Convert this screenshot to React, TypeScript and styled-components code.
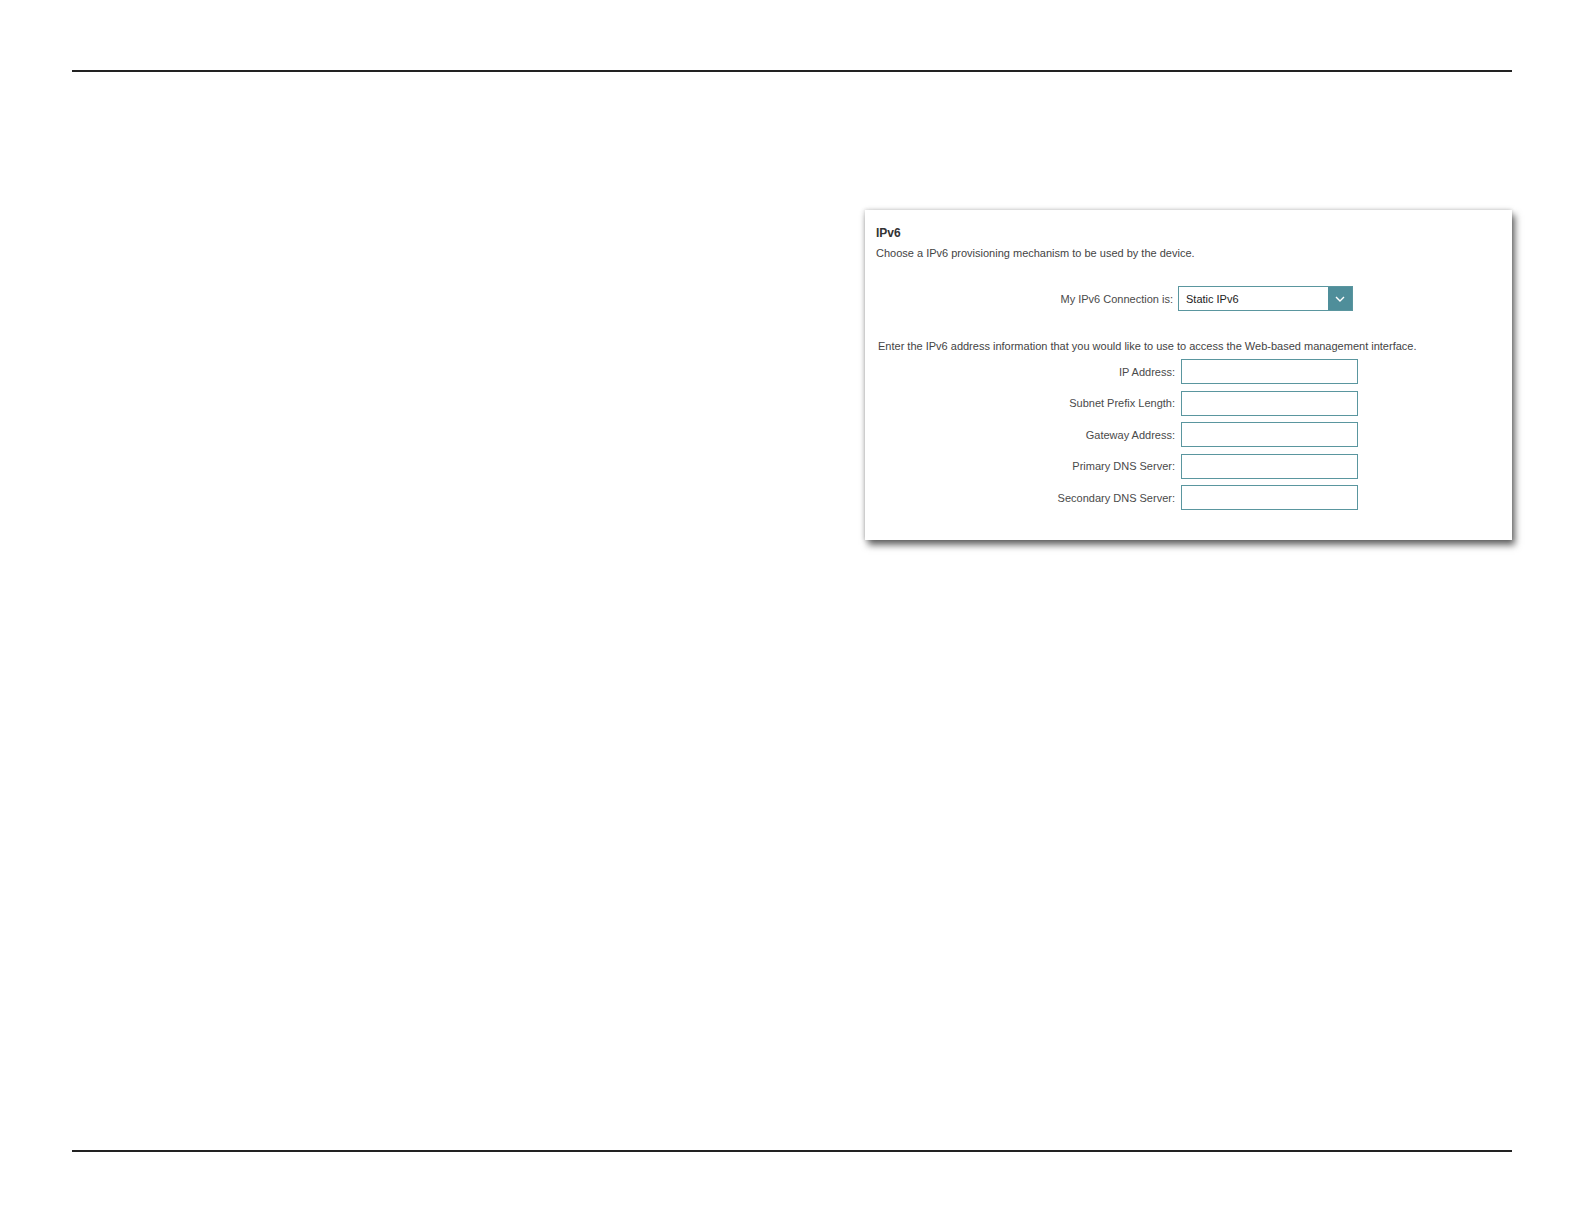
import React from "react";
import styled, { createGlobalStyle } from "styled-components";

const Global = createGlobalStyle`
  html, body { margin: 0; padding: 0; background: #fff; }
  body { font-family: "Liberation Sans", Arial, sans-serif; }
`;

const Page = styled.div`
  width: 1584px;
  height: 1224px;
  box-sizing: border-box;
  padding: 70px 72px 0;
  display: flex;
  flex-direction: column;
`;

const Rule = styled.div`
  height: 2px;
  background: #222;
`;

const Body = styled.div`
  height: 1078px;
  display: flex;
  flex-direction: column;
  align-items: flex-end;
  padding-top: 138px;
  box-sizing: border-box;
`;

const Card = styled.section`
  width: 647px;
  height: 330px;
  box-sizing: border-box;
  background: #fff;
  padding: 15px 11px 0;
  box-shadow: 3px 5px 7px rgba(0, 0, 0, 0.6), -1px 0 5px rgba(0, 0, 0, 0.14), 0 -1px 3px rgba(0, 0, 0, 0.06);
  color: #444;
  font-size: 11px;
  display: flex;
  flex-direction: column;
`;

const Title = styled.h2`
  margin: 0;
  font-size: 12px;
  font-weight: bold;
  line-height: 16px;
  color: #333;
`;

const Text = styled.p<{ $indent?: number; $top: number }>`
  margin: ${(p) => p.$top}px 0 0 ${(p) => p.$indent ?? 0}px;
  line-height: 16px;
  font-size: 11px;
`;

const Row = styled.div<{ $top: number; $label: number; $gap: number }>`
  display: grid;
  grid-template-columns: ${(p) => p.$label}px auto;
  column-gap: ${(p) => p.$gap}px;
  align-items: center;
  margin-top: ${(p) => p.$top}px;
  height: 25px;
`;

const Label = styled.label`
  text-align: right;
  line-height: 16px;
  color: #4a4a4a;
`;

const Select = styled.div`
  width: 175px;
  height: 25px;
  box-sizing: border-box;
  border: 1px solid #5a969f;
  display: flex;
  align-items: stretch;
`;

const SelectValue = styled.span`
  flex: 1;
  padding-left: 7px;
  display: flex;
  align-items: center;
  color: #222;
`;

const Arrow = styled.span`
  width: 24px;
  background: #4f8e9a;
  display: flex;
  align-items: center;
  justify-content: center;
`;

const Input = styled.input`
  width: 177px;
  height: 25px;
  box-sizing: border-box;
  border: 1px solid #5a969f;
  margin: 0;
  padding: 0 5px;
  background: #fff;
  outline: none;
`;

const fields = [
  "IP Address:",
  "Subnet Prefix Length:",
  "Gateway Address:",
  "Primary DNS Server:",
  "Secondary DNS Server:",
];

export default function App() {
  return (
    <Page>
      <Global />
      <Rule />
      <Body>
        <Card>
          <Title>IPv6</Title>
          <Text $top={4}>Choose a IPv6 provisioning mechanism to be used by the device.</Text>
          <Row $top={25} $label={297} $gap={5}>
            <Label>My IPv6 Connection is:</Label>
            <Select>
              <SelectValue>Static IPv6</SelectValue>
              <Arrow>
                <svg width="10" height="6" viewBox="0 0 10 6">
                  <path d="M1 1 L5 5 L9 1" fill="none" stroke="#fff" strokeWidth="1.4" />
                </svg>
              </Arrow>
            </Select>
          </Row>
          <Text $top={27} $indent={2}>
            Enter the IPv6 address information that you would like to use to access the Web-based management interface.
          </Text>
          {fields.map((f, i) => (
            <Row key={f} $top={i === 0 ? 5 : 6.5} $label={299} $gap={6}>
              <Label>{f}</Label>
              <Input />
            </Row>
          ))}
        </Card>
      </Body>
      <Rule />
    </Page>
  );
}
